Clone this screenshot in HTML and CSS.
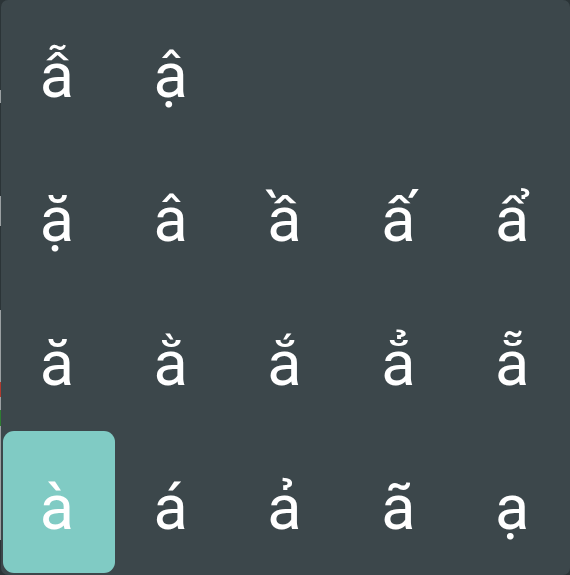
FILE: index.html
```html
<!DOCTYPE html>
<html>
<head>
<meta charset="utf-8">
<link rel="stylesheet" href="styles.css">
</head>
<body>
<div class="panel">
  <div class="key">ẫ</div>
  <div class="key">ậ</div>
  <div class="key"></div>
  <div class="key"></div>
  <div class="key"></div>
  <div class="key">ặ</div>
  <div class="key">â</div>
  <div class="key">ầ</div>
  <div class="key">ấ</div>
  <div class="key">ẩ</div>
  <div class="key">ă</div>
  <div class="key">ằ</div>
  <div class="key">ắ</div>
  <div class="key">ẳ</div>
  <div class="key">ẵ</div>
  <div class="key active">à</div>
  <div class="key">á</div>
  <div class="key">ả</div>
  <div class="key">ã</div>
  <div class="key">ạ</div>
</div>
</body>
</html>
```
FILE: styles.css
```css
html, body {
  margin: 0;
  padding: 0;
  width: 570px;
  height: 575px;
  overflow: hidden;
}
body {
  background:
    linear-gradient(to bottom,
      #2b3437 0, #2b3437 90px,
      #9aa0a2 90px, #9aa0a2 103px,
      #2b3437 103px, #2b3437 196px,
      #9aa0a2 196px, #9aa0a2 226px,
      #2b3437 226px, #2b3437 310px,
      #9aa0a2 310px, #9aa0a2 382px,
      #b03a2e 382px, #b03a2e 397px,
      #9aa0a2 397px, #9aa0a2 410px,
      #2e7d32 410px, #2e7d32 426px,
      #9aa0a2 426px, #9aa0a2 540px,
      #2b3437 540px) left top / 1px 575px no-repeat,
    #2b3437;
  font-family: Roboto, "Noto Sans", sans-serif;
}
.panel {
  margin-left: 1px;
  width: 569px;
  height: 575px;
  background: #3c474b;
  border-radius: 7px;
  display: grid;
  grid-template-columns: repeat(5, 1fr);
  grid-template-rows: repeat(4, 1fr);
  box-sizing: border-box;
}
.key {
  display: flex;
  align-items: center;
  justify-content: center;
  color: #ffffff;
  font-size: 63px;
  line-height: 1;
  padding-top: 10px;
  padding-right: 4px;
  margin: 0 0 2px 2px;
  border-radius: 11px;
}
.key.active {
  background: #80cbc4;
}
```
